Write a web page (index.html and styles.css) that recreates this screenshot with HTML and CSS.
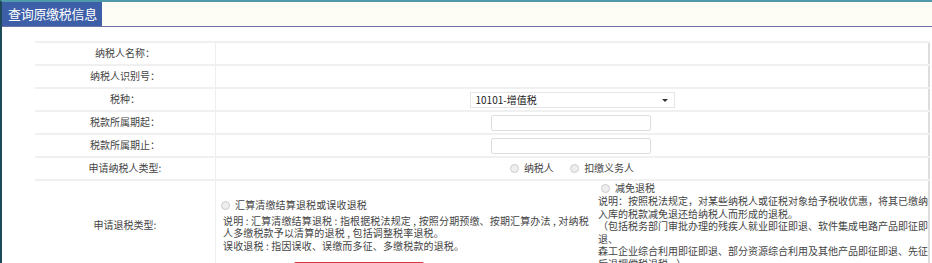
FILE: index.html
```html
<!DOCTYPE html>
<html lang="zh-CN">
  <head>
    <meta charset="UTF-8" />
    <title>查询原缴税信息</title>
    <link rel="stylesheet" href="styles.css">
  </head>
  <body>
    <div class="page">
      <div class="head">
        <span class="tab">查询原缴税信息</span>
      </div>

      <table class="info">
        <tr>
          <td class="lbl">纳税人名称：</td>
          <td></td>
        </tr>
        <tr>
          <td class="lbl">纳税人识别号：</td>
          <td></td>
        </tr>
        <tr>
          <td class="lbl">税种：</td>
          <td class="ctr">
            <span class="select">10101-增值税<i class="caret"></i></span>
          </td>
        </tr>
        <tr>
          <td class="lbl">税款所属期起：</td>
          <td class="ctr"><span class="input"></span></td>
        </tr>
        <tr>
          <td class="lbl">税款所属期止：</td>
          <td class="ctr"><span class="input"></span></td>
        </tr>
        <tr>
          <td class="lbl">申请纳税人类型:</td>
          <td class="ctr">
            <label class="radio"><i></i>纳税人</label>
            <label class="radio"><i></i>扣缴义务人</label>
          </td>
        </tr>
        <tr class="tall">
          <td class="lbl">申请退税类型:</td>
          <td>
            <div class="types">
              <div class="type left">
                <label class="radio"><i></i>汇算清缴结算退税或误收退税</label>
                <p>说明 : 汇算清缴结算退税 : 指根据税法规定 , 按照分期预缴、按期汇算办法 , 对纳税人多缴税款予以清算的退税 , 包括调整税率退税。</p>
                <p>误收退税 : 指因误收、误缴而多征、多缴税款的退税。</p>
                <span class="btn"></span>
              </div>
              <div class="type right">
                <label class="radio"><i></i>减免退税</label>
                <p>说明：按照税法规定，对某些纳税人或征税对象给予税收优惠，将其已缴纳入库的税款减免退还给纳税人而形成的退税。</p>
                <p>（包括税务部门审批办理的残疾人就业即征即退、软件集成电路产品即征即退、</p>
                <p>森工企业综合利用即征即退、部分资源综合利用及其他产品即征即退、先征后退摆偿税退税...）</p>
              </div>
            </div>
          </td>
        </tr>
      </table>
    </div>
  </body>
</html>
```

FILE: styles.css
```css
html,
body {
  margin: 0;
  padding: 0;
  height: 100%;
  overflow: hidden;
  background: #fff;
  font: 10px/1.25 "Noto Sans CJK SC", "DejaVu Sans", sans-serif;
  color: #444;
}

.page {
  height: 100%;
  border-left: 2px solid #1d4a56;
  border-top: 2px solid #4f9aa8;
  box-sizing: border-box;
}

.head {
  height: 24px;
  background: #fdfdf6;
  border-bottom: 1px solid #6d73a3;
  display: flex;
}
.tab {
  display: flex;
  align-items: center;
  padding: 0 5px 0 6px;
  background: #3d5fa8;
  color: #fff;
  font-size: 13px;
  letter-spacing: -0.3px;
}

.info {
  margin: 14px 0 0 33px;
  width: 895px;
  border-collapse: collapse;
  border-right: 2px solid #ddd;
}
.info td {
  height: 21px;
  padding: 0;
  border-top: 2px solid #f0f0f0;
  vertical-align: middle;
}
.info td.lbl {
  width: 180px;
  text-align: center;
  border-right: 1px solid #eee;
}
.info td.ctr {
  text-align: center;
}

.select {
  display: inline-block;
  position: relative;
  box-sizing: border-box;
  width: 205px;
  height: 16px;
  line-height: 14px;
  padding-left: 5px;
  text-align: left;
  border: 1px solid #e6e6e6;
  font-size: 10px;
  color: #222;
  vertical-align: middle;
}
.caret {
  position: absolute;
  right: 6px;
  top: 6px;
  border: 3px solid transparent;
  border-top: 3px solid #333;
}

.input {
  display: inline-block;
  box-sizing: border-box;
  width: 160px;
  height: 16px;
  border: 1px solid #ddd;
  border-radius: 2px;
  vertical-align: middle;
  margin-left: -2px;
}

.radio {
  display: inline-flex;
  align-items: center;
  gap: 5px;
  margin: 0 7px;
}
.radio i {
  width: 7px;
  height: 7px;
  border-radius: 50%;
  border: 1px solid #ccc;
  background: #eee;
}

.tall td {
  height: 84px;
  vertical-align: top;
}
.tall td.lbl {
  vertical-align: top;
  padding-top: 38px;
}

.types {
  display: grid;
  grid-template-columns: 377px 1fr;
  line-height: 12.5px;
}
.type p {
  margin: 0;
}
.type .radio {
  margin: 0;
}
.left {
  padding: 18px 0 0 7px;
  letter-spacing: 0.15px;
}
.left .radio {
  margin-left: -2px;
  margin-bottom: 3px;
}
.right {
  padding: 1px 0 0 5px;
}
.right .radio {
  margin-left: 3px;
}
.btn {
  display: block;
  width: 130px;
  height: 14px;
  margin: 10px 0 0 71px;
  background: #d8353c;
  border-radius: 2px;
}
```
